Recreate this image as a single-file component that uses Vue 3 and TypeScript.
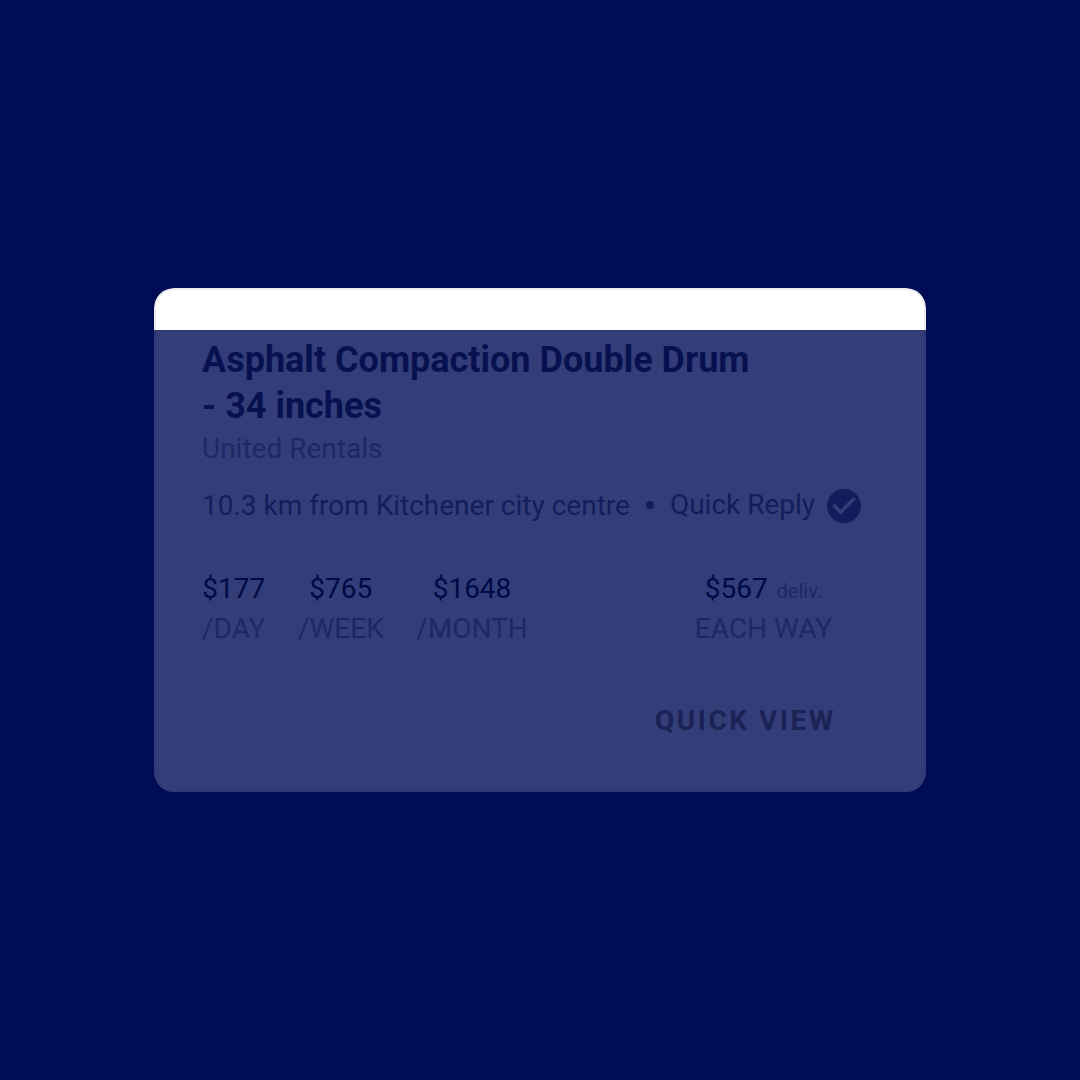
<script setup lang="ts">
interface Rate {
  price: string
  unit: string
}

const rates: Rate[] = [
  { price: '$177', unit: '/DAY' },
  { price: '$765', unit: '/WEEK' },
  { price: '$1648', unit: '/MONTH' },
]
</script>

<template>
  <main class="page">
    <article class="card">
      <div class="strip"></div>
      <div class="body">
        <h1 class="title">Asphalt Compaction Double Drum<br />- 34 inches</h1>
        <p class="vendor">United Rentals</p>
        <div class="meta">
          <span>10.3 km from Kitchener city centre</span>
          <span class="dot"></span>
          <span class="reply">Quick Reply</span>
          <svg class="check" viewBox="2 2 20 20" aria-hidden="true">
            <path
              fill="#141d5b"
              d="M12 2C6.48 2 2 6.48 2 12s4.48 10 10 10 10-4.48 10-10S17.52 2 12 2zm-2 15l-5-5 1.41-1.41L10 14.17l7.59-7.59L19 8l-9 9z"
            />
          </svg>
        </div>
        <div class="prices">
          <div v-for="rate in rates" :key="rate.unit" class="rate">
            <span class="price">{{ rate.price }}</span>
            <span class="unit">{{ rate.unit }}</span>
          </div>
          <div class="rate delivery">
            <span class="price">$567 <small>deliv.</small></span>
            <span class="unit">EACH WAY</span>
          </div>
        </div>
        <button class="quick" type="button">QUICK VIEW</button>
      </div>
    </article>
  </main>
</template>

<style>
body {
  margin: 0;
  background: #000d56;
}
</style>

<style scoped>
.page {
  height: 1080px;
  display: flex;
  align-items: center;
  justify-content: center;
  background: #000d56;
  font-family: Roboto, sans-serif;
}
.card {
  box-sizing: border-box;
  width: 772px;
  height: 504px;
  border-radius: 20px;
  overflow: hidden;
  background: #333d78;
}
.strip {
  box-sizing: border-box;
  height: 42px;
  background: #fff;
  border: 2px solid #ebebeb;
  border-bottom: 0;
  border-radius: 20px 20px 0 0;
}
.body {
  box-sizing: border-box;
  height: 462px;
  padding: 7px 48px 0 46px;
  border: 2px solid #2f3974;
  border-width: 0 2px 2px;
  border-radius: 0 0 20px 20px;
  white-space: nowrap;
}
.title {
  margin: 0;
  font-size: 36px;
  line-height: 46px;
  font-weight: 700;
  color: #081150;
}
.vendor {
  margin: 0;
  font-size: 28px;
  line-height: 40px;
  color: #1e2866;
}
.meta {
  display: flex;
  align-items: center;
  height: 40px;
  margin-top: 17px;
  font-size: 28px;
  line-height: 40px;
  color: #141d5b;
}
.dot {
  width: 8px;
  height: 8px;
  margin: -2px 16px 0;
  border-radius: 50%;
  background: #141d5b;
}
.reply {
  margin-top: -2px;
}
.check {
  width: 34px;
  height: 34px;
  margin-left: 12px;
}
.prices {
  display: flex;
  margin-top: 43px;
  gap: 32.5px;
}
.rate {
  display: flex;
  flex-direction: column;
  align-items: center;
  font-size: 28px;
  line-height: 40px;
}
.price {
  height: 40px;
  color: #000a45;
}
.price small {
  margin-left: 2px;
  font-size: 20px;
  color: #1e2866;
}
.unit {
  color: #1e2866;
}
.delivery {
  margin-left: 134.5px;
}
.quick {
  display: block;
  margin: 52px 0 0 453px;
  padding: 0;
  border: 0;
  background: none;
  font: 700 28px/40px Roboto, sans-serif;
  letter-spacing: 2.5px;
  color: #1a2354;
}
</style>
